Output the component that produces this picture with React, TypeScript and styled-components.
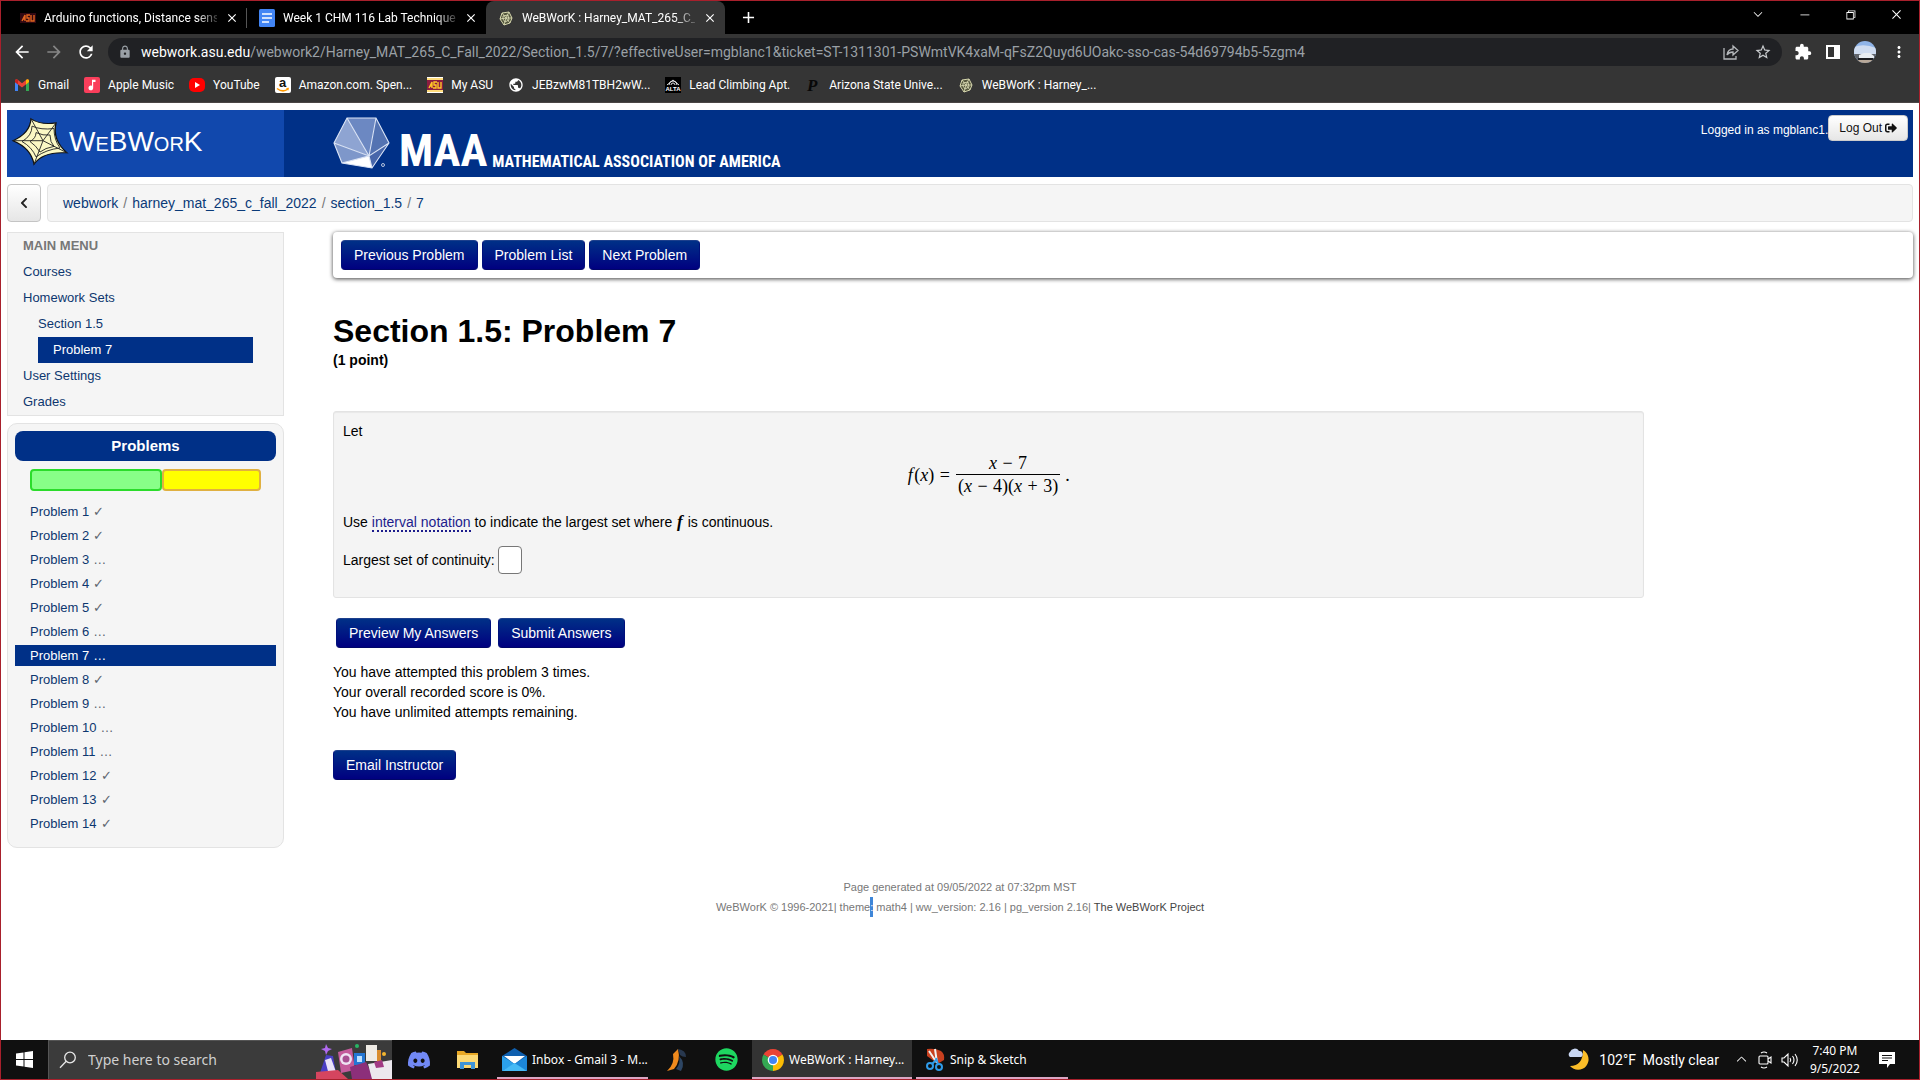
import React from "react";
import styled, { createGlobalStyle, css } from "styled-components";
import { FaDiscord, FaSpotify, FaSignOutAlt, FaYoutube, FaChevronLeft } from "react-icons/fa";
import {
  MdArrowBack,
  MdArrowForward,
  MdRefresh,
  MdLock,
  MdStarBorder,
  MdExtension,
  MdMoreVert,
  MdPublic,
  MdClose,
  MdAdd,
  MdMusicNote,
} from "react-icons/md";
import { VscChromeMinimize, VscChromeRestore, VscChromeClose, VscChevronDown, VscChevronUp } from "react-icons/vsc";

const browserFont = `"Segoe UI", Roboto, "Noto Sans", sans-serif`;
const taskbarFont = `"Segoe UI", "Noto Sans", "Open Sans", sans-serif`;
const sans = `"Liberation Sans", Arial, sans-serif`;
const serif = `"Liberation Serif", "Times New Roman", serif`;
const narrow = `"Liberation Sans Narrow", "Arial Narrow", "Roboto Condensed", "Liberation Sans", sans-serif`;
const navy = "#003087";

const GlobalStyle = createGlobalStyle`
  *, *::before, *::after { box-sizing: border-box; }
  body { margin: 0; background: #fff; }
  button, input { font: inherit; margin: 0; }
  ul { list-style: none; margin: 0; padding: 0; }
  h1, h2, p { margin: 0; }
  a { text-decoration: none; color: inherit; }
  svg { display: block; flex: none; overflow: visible; }
`;

const Screen = styled.div`
  min-height: 100vh;
  display: flex;
  flex-direction: column;
  border: 1px solid #a8202c;
  font-family: ${sans};
  font-size: 14px;
  line-height: 20px;
  color: #000;
`;

/* ---------- browser ---------- */
const TabStrip = styled.header`
  display: flex;
  align-items: center;
  height: 33px;
  padding-left: 7px;
  background: #000;
  color: #fff;
  font-family: ${browserFont};
  font-size: 12px;
`;
const Tab = styled.div<{ $active?: boolean; $divider?: boolean }>`
  display: flex;
  align-items: center;
  gap: 8px;
  width: 239px;
  height: 33px;
  padding: 0 8px 0 12px;
  border-radius: 8px 8px 0 0;
  background: ${(p) => (p.$active ? "#353535" : "transparent")};
  ${(p) => p.$divider && css`
    background: linear-gradient(#555, #555) right center / 1px 20px no-repeat;
  `}
`;
const TabTitle = styled.span`
  flex: 1;
  min-width: 0;
  white-space: nowrap;
  mask-image: linear-gradient(to right, #000 88%, rgba(0, 0, 0, 0.2));
`;
const Plain = styled.button`
  display: flex;
  align-items: center;
  justify-content: center;
  padding: 0;
  border: 0;
  background: none;
  color: inherit;
`;
const NewTab = styled(Plain)`
  width: 46px;
`;
const WindowButtons = styled.div`
  display: flex;
  margin-left: auto;
  align-self: flex-start;
`;
const WindowButton = styled(Plain)`
  width: 46px;
  height: 26px;
`;
const Toolbar = styled.div`
  display: flex;
  align-items: center;
  height: 36px;
  padding: 0 11px;
  background: #353535;
  color: #fff;
  font-family: ${browserFont};
`;
const NavButtons = styled.div`
  display: flex;
  gap: 12px;
  margin-right: 12px;
`;
const NavButton = styled(Plain)<{ $dim?: boolean }>`
  width: 20px;
  height: 28px;
  color: ${(p) => (p.$dim ? "#868686" : "#fff")};
`;
const AddressBar = styled.div`
  flex: 1;
  display: flex;
  align-items: center;
  gap: 9px;
  height: 28px;
  padding: 0 10px;
  border-radius: 14px;
  background: #202124;
  color: #9aa0a6;
  font-size: 14px;
`;
const Url = styled.div`
  flex: 1;
  white-space: nowrap;
  b { color: #fff; font-weight: 400; }
`;
const BarActions = styled.div`
  display: flex;
  gap: 14px;
`;
const Extensions = styled.div`
  display: flex;
  align-items: center;
  gap: 14px;
  margin-left: 12px;
`;
const Bookmarks = styled.nav`
  display: flex;
  align-items: center;
  gap: 15px;
  height: 33px;
  padding: 0 13px 2px;
  background: #353535;
  border-bottom: 1px solid #4a4545;
  color: #fff;
  font-family: ${browserFont};
  font-size: 12px;
`;
const Bookmark = styled.a`
  display: flex;
  align-items: center;
  gap: 8px;
  white-space: nowrap;
`;
const Swatch = styled.span<{ $bg: string; $fg?: string }>`
  display: flex;
  align-items: center;
  justify-content: center;
  flex: none;
  width: 16px;
  height: 16px;
  border-radius: 2px;
  background: ${(p) => p.$bg};
  color: ${(p) => p.$fg || "#fff"};
`;

/* ---------- page ---------- */
const Page = styled.main`
  flex: 1;
  display: flex;
  flex-direction: column;
  padding: 7px 6px 0;
`;
const Masthead = styled.div`
  display: flex;
  height: 67px;
  background: ${navy};
  color: #fff;
`;
const Brand = styled.a`
  display: flex;
  align-items: center;
  gap: 1px;
  width: 277px;
  padding: 0 0 4px 5px;
  background: #1148ad;
  font-size: 28px;
  font-variant: small-caps;
`;
const Maa = styled.a`
  display: flex;
  align-items: flex-end;
  margin-left: 49px;
  padding-bottom: 8px;
  font-family: ${narrow};
  font-weight: 700;
  white-space: nowrap;
`;
const MaaName = styled.span`
  margin: 0 5px 0 9px;
  font-size: 45px;
  line-height: 36px;
`;
const MaaFull = styled.span`
  font-size: 16px;
  line-height: 14px;
`;
const Login = styled.div`
  display: flex;
  align-items: flex-start;
  margin: 5px 5px 0 auto;
  font-size: 12px;
  span { padding-top: 5px; }
`;
const LogOut = styled.button`
  display: flex;
  align-items: center;
  gap: 3px;
  height: 26px;
  padding: 0 10px;
  border: 1px solid #ccc;
  border-radius: 4px;
  background: linear-gradient(#fff, #e6e6e6);
  color: #111;
`;
const CrumbRow = styled.div`
  display: flex;
  gap: 6px;
  margin: 7px 0 10px;
`;
const BackButton = styled.button`
  display: flex;
  align-items: center;
  justify-content: center;
  width: 34px;
  height: 38px;
  border: 1px solid #c4c4c4;
  border-radius: 4px;
  background: linear-gradient(#fff, #e6e6e6);
  color: #222;
`;
const Crumbs = styled.nav`
  flex: 1;
  display: flex;
  align-items: center;
  gap: 5px;
  padding: 0 15px;
  border: 1px solid #e3e3e3;
  border-radius: 4px;
  background: #f5f5f5;
  color: #777;
  a { color: #0a3a78; }
`;
const Columns = styled.div`
  display: grid;
  grid-template-columns: 277px minmax(0, 1fr);
  column-gap: 49px;
  align-items: start;
`;
const Side = styled.aside`
  display: flex;
  flex-direction: column;
  gap: 7px;
  font-size: 13px;
  color: #0d376f;
`;
const Menu = styled.nav`
  padding: 0 30px 0 15px;
  border: 1px solid #e3e3e3;
  background: #f5f5f5;
  line-height: 26px;
`;
const MenuTitle = styled.h2`
  font-size: 13px;
  color: #777;
`;
const Indent = styled.ul`
  padding-left: 15px;
`;
const MenuItem = styled.a<{ $current?: boolean }>`
  display: block;
  ${(p) => p.$current && css`
    padding-left: 15px;
    background: ${navy};
    color: #fff;
  `}
`;
const ProblemsPanel = styled.section`
  padding: 7px 7px 13px;
  border: 1px solid #e3e3e3;
  border-radius: 10px;
  background: #f5f5f5;
`;
const PanelTitle = styled.h2`
  border-radius: 8px;
  background: ${navy};
  color: #fff;
  font-size: 15px;
  line-height: 30px;
  text-align: center;
`;
const Progress = styled.div`
  display: grid;
  grid-template-columns: 4fr 3fr;
  height: 22px;
  margin: 8px 15px 10px;
`;
const Segment = styled.span<{ $fill: string; $line: string }>`
  border: 2px solid ${(p) => p.$line};
  border-radius: 4px;
  background: ${(p) => p.$fill};
`;
const ProblemList = styled.ul`
  display: grid;
  gap: 3px;
  line-height: 21px;
`;
const ProblemLink = styled.a<{ $current?: boolean }>`
  display: flex;
  align-items: center;
  gap: 4px;
  padding-left: 15px;
  background: ${(p) => (p.$current ? navy : "transparent")};
  color: ${(p) => (p.$current ? "#fff" : "inherit")};
`;
const Mark = styled.span<{ $current?: boolean }>`
  color: ${(p) => (p.$current ? "#fff" : "#5d6570")};
`;
const NavCard = styled.div`
  display: flex;
  gap: 4px;
  padding: 8px;
  border-radius: 4px;
  background: #fff;
  box-shadow: 0 1px 4px rgba(0, 0, 0, 0.75);
`;
const BlueButton = styled.button`
  height: 30px;
  padding: 0 12px;
  border: 1px solid;
  border-color: #1d3f8c #00107c #000668;
  border-radius: 4px;
  background: linear-gradient(${navy}, #000080);
  color: #fff;
  white-space: nowrap;
`;
const Title = styled.h1`
  margin-top: 34px;
  font-size: 32px;
  line-height: 38px;
`;
const Points = styled.p`
  margin-bottom: 41px;
  font-weight: 700;
`;
const ProblemBox = styled.section`
  display: flex;
  flex-direction: column;
  width: 83%;
  padding: 9px 9px 23px;
  border: 1px solid #e3e3e3;
  border-radius: 3px;
  background: #f4f4f4;
  box-shadow: inset 0 1px 1px rgba(0, 0, 0, 0.05);
`;
const Formula = styled.div`
  display: flex;
  align-items: center;
  justify-content: center;
  gap: 5px;
  margin: 11px 0 15px;
  font: 18px/22px ${serif};
`;
const Fraction = styled.span`
  display: inline-flex;
  flex-direction: column;
  text-align: center;
  > span + span { border-top: 1px solid #000; padding: 0 2px; }
`;
const Op = styled.span`
  margin: 0 1px;
`;
const MathF = styled.i`
  padding: 0 1px;
  font: italic 700 17px/20px ${serif};
`;
const Hint = styled.a`
  color: #1c1c8c;
  border-bottom: 2px dotted #1c1c8c;
`;
const AnswerRow = styled.label`
  display: flex;
  align-items: center;
  gap: 3px;
  margin-top: 14px;
`;
const Answer = styled.input`
  width: 24px;
  height: 28px;
  padding: 0 4px;
  border: 1px solid #777;
  border-radius: 4px;
  background: #fff;
`;
const Actions = styled.div`
  display: flex;
  gap: 7px;
  margin: 20px 3px 14px;
`;
const Status = styled.div`
  margin-bottom: 28px;
`;
const Footer = styled.footer`
  margin-top: 29px;
  font-size: 11px;
  text-align: center;
  color: #777;
  a { color: #444; }
`;
const Selected = styled.mark`
  display: inline-block;
  height: 20px;
  line-height: 20px;
  background: #3f86d8;
  color: #fff;
`;

/* ---------- taskbar ---------- */
const Taskbar = styled.footer`
  display: flex;
  align-items: stretch;
  height: 39px;
  background: #101010;
  color: #fff;
  font-family: ${taskbarFont};
  font-size: 12px;
`;
const Start = styled(Plain)`
  width: 47px;
`;
const Search = styled.label`
  display: flex;
  align-items: center;
  gap: 11px;
  width: 344px;
  padding-left: 10px;
  border: 1px solid #555;
  border-width: 1px 0 0 1px;
  background: #3b3b3b;
`;
const SearchInput = styled.input`
  flex: 1;
  min-width: 0;
  padding: 0;
  border: 0;
  background: none;
  font-size: 14px;
  &::placeholder { color: #d0d0d0; opacity: 1; }
`;
const Pinned = styled(Plain)`
  width: 49px;
`;
const PinnedGroup = styled.div`
  display: flex;
  padding: 0 5px 0 2px;
`;
const Task = styled.button<{ $width: number; $pad: number; $active?: boolean }>`
  display: flex;
  align-items: center;
  gap: 5px;
  width: ${(p) => p.$width}px;
  padding: 0 0 0 ${(p) => p.$pad}px;
  border: 0;
  background: ${(p) => (p.$active ? "#333" : "none")};
  box-shadow: inset 0 -2px #dba6c4;
  color: #fff;
  white-space: nowrap;
`;
const TaskGap = styled.div<{ $width: number }>`
  display: flex;
  align-items: center;
  justify-content: center;
  gap: 28px;
  width: ${(p) => p.$width}px;
  padding-left: 4px;
`;
const Tray = styled.div`
  display: flex;
  align-items: center;
  gap: 9px;
  margin-left: auto;
  padding-right: 24px;
`;
const Weather = styled.span`
  display: flex;
  align-items: center;
  gap: 8px;
  margin-right: 6px;
  font-size: 14px;
  font-family: ${browserFont};
  white-space: pre;
`;
const Clock = styled.time`
  margin-left: 2px;
  line-height: 18px;
  text-align: center;
`;
const NoticeButton = styled(Plain)`
  margin-left: 10px;
`;

/* ---------- drawings ---------- */
const AsuIcon = ({ light }: { light?: boolean }) => (
  <svg width="16" height="16" viewBox="0 0 16 16">
    {light && <path d="M0 0h16v16H0z" fill="#fff" />}
    <path d="M0 3h16v10H0z" fill={light ? "#8c1d40" : "#310913"} />
    {light && <path d="M0 1h16v2H0zM0 13h16v2H0z" fill="#ffc627" opacity=".6" />}
    <path d="M2 11l3-6v6M3 9h2M10 5H7v3h2v3H6M11 5v6h3V5" fill="none" stroke={light ? "#ffc627" : "#e0641f"} strokeWidth="1.4" />
  </svg>
);
const DocsIcon = () => (
  <svg width="16" height="18" viewBox="0 0 16 18">
    <rect width="16" height="18" rx="1.5" fill="#4285f4" />
    <path d="M3 5h10M3 9h10M3 13h7" stroke="#fff" strokeWidth="1.6" />
  </svg>
);
const WebLogo = () => (
  <svg width="56" height="47" viewBox="-1 -1 56 58" preserveAspectRatio="none">
    <path d="M18 0Q28 8 43 5 39 26 54 42 30 40 21 56 18 36 0 27 17 18 18 0Z" fill="#fbf8c4" stroke="#111" strokeWidth="1.3" />
    <path
      d="M18 0l12 27L43 5M0 27h30l24 15M21 56l9-29M19 9q9 5 22 3 0 14 6 24-14 2-24 11-4-12-14-19 10-7 10-19ZM23 17q7 4 14 3 0 9 4 14-9 2-14 7-4-8-10-13 6-4 6-11Z"
      fill="none"
      stroke="#222"
      strokeWidth="1"
    />
  </svg>
);
const WebFavicon = () => (
  <svg width="16" height="16" viewBox="0 0 16 16">
    <path d="M4 3l7-1 3 6-2 5-6 2-4-6z" fill="#55573e" stroke="#d5d6ac" />
    <path d="M4 3l4 5 3-6M2 9l6-1 6 0M6 15l2-7 4 5M5 6l5-1 1 5-4 2-2-3z" fill="none" stroke="#e4e5bd" strokeWidth=".8" />
  </svg>
);
const GmailIcon = () => (
  <svg width="16" height="16" viewBox="0 0 16 16">
    <path d="M1 14V5l3 2v7z" fill="#4285f4" />
    <path d="M12 14V7l3-2v9z" fill="#34a853" />
    <path d="M1 5V3.500q1-2 3-.5l4 3.200L12 3q2-1.500 3 .5V5L8 10.500z" fill="#ea4335" />
    <path d="M12 3q2-1.500 3 .5V5l-3 2.400z" fill="#fbbc04" />
    <path d="M1 3.500q1-2 3-.5v4.400L1 5z" fill="#c5221f" />
  </svg>
);
const AmazonIcon = () => (
  <Swatch $bg="#fff" $fg="#111">
    <svg width="16" height="16" viewBox="0 0 16 16">
      <text x="4" y="10" fontFamily="Liberation Sans" fontSize="13" fontWeight="700" fill="#111">a</text>
      <path d="M2 11.500q6 4.500 11 .5" fill="none" stroke="#f90" strokeWidth="1.500" />
      <path d="M11 11l3-.3-.8 3z" fill="#f90" />
    </svg>
  </Swatch>
);
const HallIcon = () => (
  <svg width="16" height="16" viewBox="0 0 16 16">
    <path d="M0 0h16v16H0z" fill="#000" />
    <path d="M2 8l6-5 6 5M4 8a4 4 0 018 0M6 8a2 2 0 014 0" fill="none" stroke="#ddd" />
    <text x="8" y="14" textAnchor="middle" fontFamily="Liberation Sans" fontSize="6" fontWeight="700" fill="#fff">ALTA</text>
  </svg>
);
const YoutubeIcon = () => (
  <svg width="16" height="16" viewBox="0 0 16 16">
    <rect y="1" width="16" height="14" rx="5" fill="#f00" />
    <path d="M6 5l5 3-5 3z" fill="#fff" />
  </svg>
);
const ShareIcon = () => (
  <svg width="18" height="18" viewBox="0 0 18 18" fill="none" stroke="#b5b8bb" strokeWidth="1.3">
    <path d="M2 5v11h12v-3M5 12q1-6 6-6V3l5 4.500-5 4.500V9Q7 9 5 12Z" />
  </svg>
);
const PanelIcon = () => (
  <svg width="14" height="14" viewBox="0 0 14 14">
    <path d="M0 0h14v14H0zM2 2v10h6V2z" fill="#fff" fillRule="evenodd" />
  </svg>
);
const Avatar = () => (
  <svg width="22" height="22" viewBox="0 0 22 22">
    <clipPath id="avatar"><circle cx="11" cy="11" r="11" /></clipPath>
    <g clipPath="url(#avatar)">
      <path d="M0 0h22v22H0z" fill="#8fb4e8" />
      <path d="M0 6q10-4 22 1v6H0z" fill="#cfdcf0" />
      <path d="M0 13h22v9H0z" fill="#60646b" />
      <path d="M5 14l5-2h6l4 3v2H5z" fill="#e8edf2" />
      <path d="M4 17h15v3H4z" fill="#1c1e22" />
      <path d="M0 19h22v3H0z" fill="#b8a99a" />
    </g>
  </svg>
);
const MaaIcon = () => (
  <svg width="57" height="52" viewBox="0 0 57 52">
    <path d="M14 1 43 1 56 26 39 51 9 46 1 26Z" fill="#2f559f" />
    <path d="M14 1 43 1 36 39Z" fill="#6c88c2" />
    <path d="M14 1 1 26l35 13z" fill="#8ea4d2" />
    <path d="M43 1l13 25-20 13z" fill="#5473b2" />
    <path d="M1 26l8 20 27-7z" fill="#7e97ca" />
    <path d="M56 26L36 39l3 12z" fill="#4766aa" />
    <path d="M36 39 39 51 9 46Z" fill="#fff" />
    <path d="M14 1 43 1 56 26 39 51 9 46 1 26ZL36 39 43 1M1 26l35 13 20-13M9 46l27-7 3 12" fill="none" stroke="#dbe4f5" strokeWidth="1.1" />
    <circle cx="50" cy="48" r="1.5" fill="none" stroke="#fff" strokeWidth=".7" />
  </svg>
);
const WindowsLogo = () => (
  <svg width="17" height="17" viewBox="0 0 17 17" fill="#fff">
    <path d="M0 2.500l7.500-1V8H0zM8.500 1.300L17 0v8H8.500zM0 9h7.500v6.500l-7.500-1zM8.500 9H17v8l-8.500-1.300z" />
  </svg>
);
const SearchIcon = () => (
  <svg width="18" height="18" viewBox="0 0 18 18" fill="none" stroke="#e8e8e8" strokeWidth="1.3">
    <circle cx="11" cy="6.500" r="5.300" />
    <path d="M7.200 10.300 1 16.700" />
  </svg>
);
const SearchArt = () => (
  <svg width="76" height="37" viewBox="0 0 76 37">
    <path d="M2 37 10 13l7 1 4 23z" fill="#4a3fc4" />
    <path d="M9 18l6-2 5 14-7 3z" fill="#e9e4f8" />
    <path d="M10 2l2 4 4 1-4 2-2 4-1-4-4-2 4-1z" fill="#b06af0" />
    <path d="M0 30l22-2 10 9H0z" fill="#d5455f" />
    <path d="M22 10l14-4 3 22-14 3z" fill="#c45a9b" />
    <circle cx="30" cy="17" r="6" fill="#efe3f3" />
    <circle cx="30" cy="17" r="3.500" fill="#a84f92" />
    <circle cx="41" cy="4" r="2" fill="#27b765" />
    <path d="M38 11h11v12H38z" fill="#2476d4" />
    <path d="M41 14h5v6h-5z" fill="#bde0ff" />
    <path d="M50 3h11v16H50z" fill="#efebe6" />
    <path d="M61 8h4v14h-4z" fill="#d98c2e" />
    <path d="M34 25l16-5 8 17H36z" fill="#8c2f7a" />
    <path d="M52 22l24-4v19H56z" fill="#ece8ee" />
    <path d="M58 20l8-2 2 7-8 1z" fill="#a23a84" />
    <circle cx="68" cy="12" r="2" fill="#f2b52f" />
  </svg>
);
const FolderIcon = () => (
  <svg width="23" height="20" viewBox="0 0 23 20">
    <path d="M1 1h7l2 2h12v15H1z" fill="#e8a825" />
    <path d="M1 5h21v13H1z" fill="#fcd975" />
    <path d="M4 19v-7h15v7h-4v-4H8v4z" fill="#3f94d8" />
  </svg>
);
const MailIcon = () => (
  <svg width="25" height="23" viewBox="0 0 25 23">
    <path d="M0 8 12.500 0 25 8v15H0z" fill="#0f5fae" />
    <path d="M2 8h21l-10.500 8z" fill="#fff" />
    <path d="M0 8l12.500 8L0 23z" fill="#2ba0ea" />
    <path d="M25 8l-12.500 8L25 23z" fill="#1c86d8" />
    <path d="M0 23l12.500-8L25 23z" fill="#45b9f5" />
  </svg>
);
const LeagueIcon = () => (
  <svg width="20" height="24" viewBox="0 0 20 24">
    <path d="M0 23Q8 16 6 6L11 1q3 12-4 20z" fill="#f08a1d" />
    <path d="M11 1q8 1 8 8-4 0-6-2z" fill="#28384f" />
    <path d="M12 8q7 7 2 15l-5-2q5-6 3-13z" fill="#2d4563" />
  </svg>
);
const ChromeIcon = () => (
  <svg width="22" height="22" viewBox="0 0 22 22">
    <path d="M11 11 1.500 5.500A11 11 0 0120.500 5.500z" fill="#ea4335" />
    <path d="M11 11 20.500 5.500A11 11 0 0111 22z" fill="#fbbc04" />
    <path d="M11 11 1.500 5.500A11 11 0 0011 22z" fill="#34a853" />
    <circle cx="11" cy="11" r="5.300" fill="#fff" />
    <circle cx="11" cy="11" r="4" fill="#4285f4" />
  </svg>
);
const SnipIcon = () => (
  <svg width="19" height="23" viewBox="0 0 19 23">
    <path d="M1 1q8-1 14 2 4 3 3 9l-5 3-5-2-7-5z" fill="#c8401f" />
    <path d="M9 1l2 14M3 3l8 12" stroke="#f1f1f1" strokeWidth="2" />
    <circle cx="4" cy="18" r="3" fill="none" stroke="#2f9be8" strokeWidth="2" />
    <circle cx="13" cy="19" r="3" fill="none" stroke="#2f9be8" strokeWidth="2" />
    <path d="M6 16l5-5M12 16l-2-6" stroke="#2f9be8" strokeWidth="2" />
  </svg>
);
const MoonIcon = () => (
  <svg width="24" height="24" viewBox="0 0 24 24">
    <path d="M16 2a10.500 10.500 0 11-13 16q13 0 13-16z" fill="#fbbd28" />
    <path d="M3 9a3 3 0 010-5 5 5 0 019-1 3.200 3.200 0 012 6z" fill="#c9d7f3" />
  </svg>
);
const MeetIcon = () => (
  <svg width="14" height="18" viewBox="0 0 14 18" fill="none" stroke="#fff" strokeWidth="1.100">
    <rect x="1" y="5" width="9" height="8" rx="1" />
    <path d="M10 8l3-2v6l-3-2M3 2q3-2 6 0M3 16q3 2 6 0" />
  </svg>
);
const SoundIcon = () => (
  <svg width="18" height="16" viewBox="0 0 18 16" fill="none" stroke="#fff" strokeWidth="1.100">
    <path d="M1 6h2l4-4v12l-4-4H1zM9 6q1.500 2 0 4M11.500 4q3 4 0 8M14 2q4.500 6 0 12" />
  </svg>
);
const NoticeIcon = () => (
  <svg width="16" height="16" viewBox="0 0 16 16">
    <path d="M0 0h16v12h-5l-3 4v-4H0z" fill="#fff" />
    <path d="M3 3.500h10M3 6h10M3 8.500h6" stroke="#101010" />
  </svg>
);

const solved: Record<number, boolean> = { 1: true, 2: true, 4: true, 5: true, 8: true, 12: true, 13: true, 14: true };
const problems = Array.from({ length: 14 }, (_, i) => i + 1);

const bookmarks: [React.ReactNode, string][] = [
  [<GmailIcon key="i" />, "Gmail"],
  [<Swatch key="i" $bg="#fa3e5b"><MdMusicNote size={14} /></Swatch>, "Apple Music"],
  [<YoutubeIcon key="i" />, "YouTube"],
  [<AmazonIcon key="i" />, "Amazon.com. Spen..."],
  [<AsuIcon key="i" light />, "My ASU"],
  [<MdPublic key="i" size={16} />, "JEBzwM81TBH2wW..."],
  [<HallIcon key="i" />, "Lead Climbing Apt."],
  [
    <svg key="i" width="16" height="16" viewBox="0 0 16 16">
      <text x="2" y="14" fontFamily="Liberation Serif" fontStyle="italic" fontWeight="700" fontSize="17" fill="#080808">P</text>
    </svg>,
    "Arizona State Unive...",
  ],
  [<WebFavicon key="i" />, "WeBWorK : Harney_..."],
];

export default function App() {
  return (
    <Screen>
      <GlobalStyle />
      <TabStrip>
        <Tab $divider>
          <AsuIcon />
          <TabTitle>Arduino functions, Distance sens</TabTitle>
          <Plain aria-label="Close tab"><MdClose size={14} /></Plain>
        </Tab>
        <Tab>
          <DocsIcon />
          <TabTitle>Week 1 CHM 116 Lab Technique</TabTitle>
          <Plain aria-label="Close tab"><MdClose size={14} /></Plain>
        </Tab>
        <Tab $active>
          <WebFavicon />
          <TabTitle>WeBWorK : Harney_MAT_265_C_F</TabTitle>
          <Plain aria-label="Close tab"><MdClose size={14} /></Plain>
        </Tab>
        <NewTab aria-label="New tab"><MdAdd size={19} /></NewTab>
        <WindowButtons>
          <WindowButton aria-label="Search tabs"><VscChevronDown size={14} /></WindowButton>
          <WindowButton aria-label="Minimize"><VscChromeMinimize size={13} /></WindowButton>
          <WindowButton aria-label="Restore"><VscChromeRestore size={13} /></WindowButton>
          <WindowButton aria-label="Close"><VscChromeClose size={13} /></WindowButton>
        </WindowButtons>
      </TabStrip>
      <Toolbar>
        <NavButtons>
          <NavButton aria-label="Back"><MdArrowBack size={20} /></NavButton>
          <NavButton aria-label="Forward" $dim><MdArrowForward size={20} /></NavButton>
          <NavButton aria-label="Reload"><MdRefresh size={20} /></NavButton>
        </NavButtons>
        <AddressBar>
          <MdLock size={14} />
          <Url>
            <b>webwork.asu.edu</b>
            /webwork2/Harney_MAT_265_C_Fall_2022/Section_1.5/7/?effectiveUser=mgblanc1&amp;ticket=ST-1311301-PSWmtVK4xaM-qFsZ2Quyd6UOakc-sso-cas-54d69794b5-5zgm4
          </Url>
          <BarActions>
            <Plain aria-label="Share"><ShareIcon /></Plain>
            <Plain aria-label="Bookmark"><MdStarBorder size={18} color="#c8cbce" /></Plain>
          </BarActions>
        </AddressBar>
        <Extensions>
          <Plain aria-label="Extensions"><MdExtension size={18} /></Plain>
          <Plain aria-label="Side panel"><PanelIcon /></Plain>
          <Plain aria-label="Profile"><Avatar /></Plain>
          <Plain aria-label="Menu"><MdMoreVert size={18} /></Plain>
        </Extensions>
      </Toolbar>
      <Bookmarks>
        {bookmarks.map(([icon, label]) => (
          <Bookmark href="#" key={label}>{icon}{label}</Bookmark>
        ))}
      </Bookmarks>

      <Page>
        <Masthead>
          <Brand href="#"><WebLogo />WeBWorK</Brand>
          <Maa href="#">
            <MaaIcon />
            <MaaName>MAA</MaaName>
            <MaaFull>MATHEMATICAL ASSOCIATION OF AMERICA</MaaFull>
          </Maa>
          <Login>
            <span>Logged in as mgblanc1.</span>
            <LogOut>Log Out <FaSignOutAlt size={12} /></LogOut>
          </Login>
        </Masthead>
        <CrumbRow>
          <BackButton aria-label="Toggle menu"><FaChevronLeft size={12} /></BackButton>
          <Crumbs>
            <a href="#">webwork</a>/<a href="#">harney_mat_265_c_fall_2022</a>/<a href="#">section_1.5</a>/<a href="#">7</a>
          </Crumbs>
        </CrumbRow>
        <Columns>
          <Side>
            <Menu>
              <MenuTitle>MAIN MENU</MenuTitle>
              <ul>
                <li><MenuItem href="#">Courses</MenuItem></li>
                <li>
                  <MenuItem href="#">Homework Sets</MenuItem>
                  <Indent>
                    <li><MenuItem href="#">Section 1.5</MenuItem></li>
                    <li><MenuItem href="#" $current>Problem 7</MenuItem></li>
                  </Indent>
                </li>
                <li><MenuItem href="#">User Settings</MenuItem></li>
                <li><MenuItem href="#">Grades</MenuItem></li>
              </ul>
            </Menu>
            <ProblemsPanel>
              <PanelTitle>Problems</PanelTitle>
              <Progress>
                <Segment $fill="#88ff88" $line="#2bdc2b" />
                <Segment $fill="#ffff00" $line="#e0b040" />
              </Progress>
              <ProblemList>
                {problems.map((n) => (
                  <li key={n}>
                    <ProblemLink href="#" $current={n === 7}>
                      Problem {n}
                      <Mark $current={n === 7}>{solved[n] ? "✓" : "…"}</Mark>
                    </ProblemLink>
                  </li>
                ))}
              </ProblemList>
            </ProblemsPanel>
          </Side>
          <div>
            <NavCard>
              <BlueButton>Previous Problem</BlueButton>
              <BlueButton>Problem List</BlueButton>
              <BlueButton>Next Problem</BlueButton>
            </NavCard>
            <Title>Section 1.5: Problem 7</Title>
            <Points>(1 point)</Points>
            <ProblemBox>
              <p>Let</p>
              <Formula>
                <span><i>f</i>&#8202;(<i>x</i>) <Op>=</Op></span>
                <Fraction>
                  <span><i>x</i> <Op>−</Op> 7</span>
                  <span>(<i>x</i> <Op>−</Op> 4)(<i>x</i> <Op>+</Op> 3)</span>
                </Fraction>
                <span>.</span>
              </Formula>
              <p>
                Use <Hint href="#">interval notation</Hint> to indicate the largest set where <MathF>f</MathF> is continuous.
              </p>
              <AnswerRow>
                Largest set of continuity:
                <Answer type="text" />
              </AnswerRow>
            </ProblemBox>
            <Actions>
              <BlueButton>Preview My Answers</BlueButton>
              <BlueButton>Submit Answers</BlueButton>
            </Actions>
            <Status>
              <p>You have attempted this problem 3 times.</p>
              <p>Your overall recorded score is 0%.</p>
              <p>You have unlimited attempts remaining.</p>
            </Status>
            <BlueButton>Email Instructor</BlueButton>
          </div>
        </Columns>
        <Footer>
          <p>Page generated at 09/05/2022 at 07:32pm MST</p>
          <p>
            WeBWorK © 1996-2021| theme<Selected>:</Selected> math4 | ww_version: 2.16 | pg_version 2.16| <a href="#">The WeBWorK Project</a>
          </p>
        </Footer>
      </Page>

      <Taskbar>
        <Start aria-label="Start"><WindowsLogo /></Start>
        <Search>
          <SearchIcon />
          <SearchInput type="text" placeholder="Type here to search" aria-label="Search" />
          <SearchArt />
        </Search>
        <PinnedGroup>
          <Pinned aria-label="Discord"><FaDiscord size={24} color="#7289f5" /></Pinned>
          <Pinned aria-label="File Explorer"><FolderIcon /></Pinned>
        </PinnedGroup>
        <Task $width={151} $pad={5}><MailIcon />Inbox - Gmail 3 - M...</Task>
        <TaskGap $width={104}>
          <Plain aria-label="Game"><LeagueIcon /></Plain>
          <Plain aria-label="Spotify"><FaSpotify size={23} color="#1ed760" /></Plain>
        </TaskGap>
        <Task $width={160} $pad={10} $active><ChromeIcon />WeBWorK : Harney...</Task>
        <TaskGap $width={4} />
        <Task $width={152} $pad={10}><SnipIcon />Snip &amp; Sketch</Task>
        <Tray>
          <Weather><MoonIcon />102°F  Mostly clear</Weather>
          <VscChevronUp size={15} />
          <MeetIcon />
          <SoundIcon />
          <Clock>7:40 PM<br />9/5/2022</Clock>
          <NoticeButton aria-label="Notifications"><NoticeIcon /></NoticeButton>
        </Tray>
      </Taskbar>
    </Screen>
  );
}
